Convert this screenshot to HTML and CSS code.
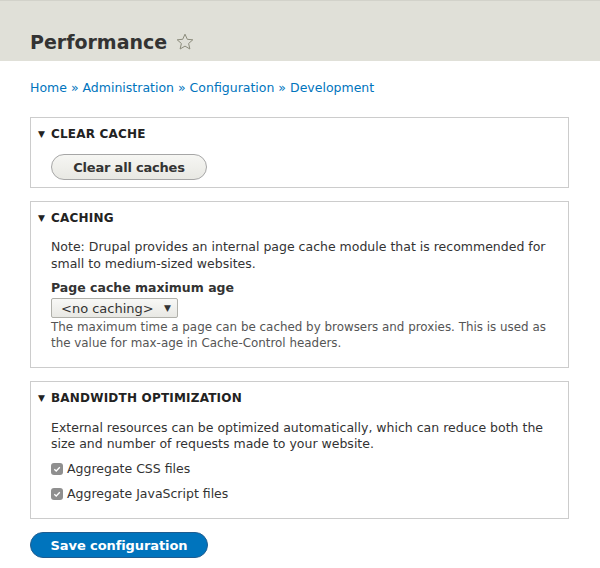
FILE: index.html
```html
<!DOCTYPE html>
<html>
<head>
<meta charset="utf-8">
<link rel="stylesheet" href="styles.css">
</head>
<body>
<div class="header">
  <h1 class="title">Performance <svg class="star" width="18" height="18" viewBox="0 0 18 18"><polygon points="9,1.2 11.3,6.3 16.8,6.8 12.6,10.5 13.9,16 9,13.1 4.1,16 5.4,10.5 1.2,6.8 6.7,6.3" fill="none" stroke="#8c8c7c" stroke-width="1" stroke-linejoin="round"/></svg></h1>
</div>
<div class="content">
  <nav class="breadcrumb"><a href="#">Home</a> » <a href="#">Administration</a> » <a href="#">Configuration</a> » <a href="#">Development</a></nav>

  <div class="fieldset fs-clear">
    <div class="legend"><span class="tri">▼</span>CLEAR CACHE</div>
    <div class="fs-body">
      <button class="btn">Clear all caches</button>
    </div>
  </div>

  <div class="fieldset fs-caching">
    <div class="legend"><span class="tri">▼</span>CACHING</div>
    <div class="fs-body">
      <p class="text">Note: Drupal provides an internal page cache module that is recommended for small to medium-sized websites.</p>
      <div class="label">Page cache maximum age</div>
      <div class="select"><span>&lt;no caching&gt;</span><span class="arrow">▼</span></div>
      <p class="desc">The maximum time a page can be cached by browsers and proxies. This is used as the value for max-age in Cache-Control headers.</p>
    </div>
  </div>

  <div class="fieldset fs-bw">
    <div class="legend"><span class="tri">▼</span>BANDWIDTH OPTIMIZATION</div>
    <div class="fs-body">
      <p class="text">External resources can be optimized automatically, which can reduce both the size and number of requests made to your website.</p>
      <div class="check"><span class="box"><svg width="12" height="12" viewBox="0 0 12 12"><path d="M3.3 6.2 L5.2 8 L8.8 4.2" fill="none" stroke="#fff" stroke-width="1.3"/></svg></span>Aggregate CSS files</div>
      <div class="check"><span class="box"><svg width="12" height="12" viewBox="0 0 12 12"><path d="M3.3 6.2 L5.2 8 L8.8 4.2" fill="none" stroke="#fff" stroke-width="1.3"/></svg></span>Aggregate JavaScript files</div>
    </div>
  </div>

  <button class="btn btn-primary">Save configuration</button>
</div>
</body>
</html>
```
FILE: styles.css
```css
html, body {
  margin: 0;
  padding: 0;
  background: #fff;
}
body {
  font-family: "DejaVu Sans", sans-serif;
  font-size: 12.5px;
  color: #333;
}
.header {
  background: #e0e0d8;
  border-top: 1px solid #d2d2ca;
  padding: 0 30px;
  box-sizing: border-box;
  height: 61px;
}
.title {
  margin: 0;
  padding-top: 27px;
  font-size: 19px;
  line-height: 28px;
  font-weight: bold;
  color: #333;
  display: flex;
  align-items: center;
  gap: 9px;
}
.star {
  display: block;
}
.content {
  padding: 0 30px;
}
.breadcrumb {
  margin-top: 18px;
  line-height: 17px;
  color: #0074bd;
}
.breadcrumb a {
  color: #0074bd;
  text-decoration: none;
}
.fieldset {
  border: 1px solid #ccc;
  margin-top: 13px;
  padding: 8px 20px 6px 20px;
  width: 539px;
  box-sizing: border-box;
}
.fs-clear { margin-top: 21px; padding-bottom: 7px; }
.legend {
  font-weight: bold;
  font-size: 12px;
  line-height: 16px;
  letter-spacing: 0.2px;
  color: #222;
  margin-left: -13px;
}
.tri {
  font-size: 9px;
  display: inline-block;
  width: 13px;
  vertical-align: 1px;
}
.fs-clear .fs-body { padding-top: 12px; }
.btn {
  font-family: "DejaVu Sans", sans-serif;
  font-weight: bold;
  font-size: 13px;
  letter-spacing: -0.2px;
  height: 26px;
  border-radius: 13px;
  border: 1px solid #a6a6a6;
  background: linear-gradient(#f6f6f3, #e8e8e3);
  color: #333;
  padding: 0;
  white-space: nowrap;
  cursor: pointer;
  display: block;
}
.fs-clear .btn { width: 156px; }
.text {
  margin: 12px 0 0;
  line-height: 17px;
}
.label {
  font-weight: bold;
  margin-top: 7px;
  line-height: 17px;
}
.select {
  margin-top: 2px;
  width: 127px;
  height: 20px;
  box-sizing: border-box;
  border: 1px solid #b0b0aa;
  border-radius: 2px;
  background: linear-gradient(#f8f8f6, #e8e8e4);
  display: flex;
  align-items: center;
  justify-content: space-between;
  padding: 0 6px 0 9px;
  font-size: 13px;
}
.select .arrow {
  font-size: 9px;
}
.desc {
  margin: 1px 0 0;
  font-size: 11.9px;
  line-height: 16px;
  color: #555;
  padding-bottom: 10px;
}
.fs-bw .text { margin-top: 14px; line-height: 16px; }
.check {
  display: flex;
  align-items: center;
  line-height: 17px;
  margin-top: 8px;
}
.check + .check { margin-top: 8px; }
.fs-bw .fs-body { padding-bottom: 10px; }
.box {
  width: 12px;
  height: 12px;
  border-radius: 3px;
  background: #8f8f8f;
  margin-right: 4px;
  display: inline-flex;
}
.btn-primary {
  margin-top: 13px;
  background: #0074bd;
  border-color: #1e5c90;
  color: #fff;
  width: 178px;
  letter-spacing: -0.1px;
}
```
